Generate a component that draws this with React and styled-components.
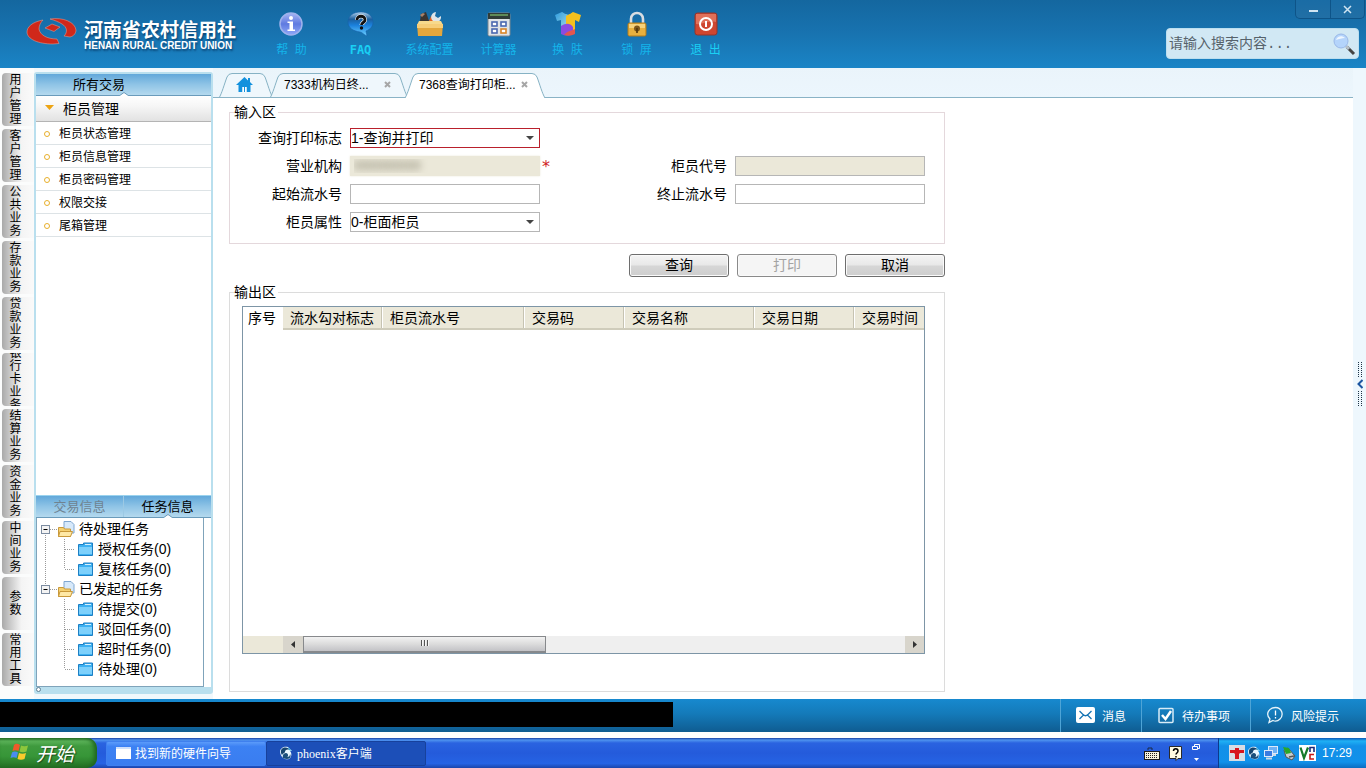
import { useState } from "react";
import styled, { createGlobalStyle } from "styled-components";

const GlobalStyle = createGlobalStyle`
  * {
    box-sizing: border-box;
  }
  body {
    margin: 0;
    font-family: "Liberation Sans", "Noto Sans CJK SC", sans-serif;
    font-size: 14px;
    line-height: 20px;
    color: #000;
    background: #fff;
  }
  button, input, select {
    font-family: inherit;
    font-size: inherit;
    color: inherit;
    margin: 0;
    padding: 0;
    border-radius: 0;
  }
  button {
    border: none;
    background: none;
    cursor: pointer;
  }
  svg {
    display: block;
    flex: none;
  }
  a {
    color: inherit;
    text-decoration: none;
  }
  ul {
    list-style: none;
    margin: 0;
    padding: 0;
  }
`;

const Page = styled.div`
  min-height: 100vh;
  display: flex;
  flex-direction: column;
`;

/* ---------- header ---------- */

const Header = styled.header`
  height: 68px;
  display: flex;
  background: linear-gradient(#14679f, #1873b0 50%, #1a84c6);
`;

const Brand = styled.div`
  width: 257px;
  padding: 17px 0 0 25px;
  display: flex;
  gap: 7px;
`;

const BrandText = styled.div`
  padding-top: 3px;
  color: #fff;
  font-weight: bold;
  white-space: nowrap;
  text-shadow: 1px 2px 2px rgba(0, 40, 80, 0.6);
`;

const BrandName = styled.div`
  font-size: 19px;
  line-height: 21px;
`;

const BrandSub = styled.div`
  font-size: 10px;
  line-height: 10px;
`;

const ToolBar = styled.nav`
  display: flex;
`;

const ToolButton = styled.button`
  width: 69px;
  padding-top: 10px;
  display: flex;
  flex-direction: column;
  align-items: center;
  gap: 2px;
  color: ${(props) => (props.$bright ? "#1ad0f4" : "#14b4ea")};
  font-size: 12px;
  font-weight: ${(props) => (props.$latin ? "bold" : "normal")};
  font-family: ${(props) =>
    props.$latin
      ? '"DejaVu Sans Mono", monospace'
      : '"Liberation Sans", "Noto Sans CJK SC", sans-serif'};
  line-height: 22px;
  white-space: pre;
`;

const HeaderRight = styled.div`
  margin-left: auto;
  display: flex;
  flex-direction: column;
  align-items: flex-end;
  gap: 9px;
`;

const WindowButtons = styled.div`
  display: flex;
  height: 19px;
  margin-right: 1px;
  border: 1px solid #0e5488;
  border-top: none;
  border-radius: 0 0 5px 5px;
  background: linear-gradient(#1a6ca5, #216fa5);
  button {
    width: 34px;
    display: flex;
    align-items: center;
    justify-content: center;
  }
  button + button {
    border-left: 1px solid #0e5488;
  }
`;

const SearchBox = styled.label`
  width: 193px;
  height: 31px;
  margin-right: 7px;
  padding: 0 2px;
  display: flex;
  align-items: center;
  border: 1px solid #bcdff0;
  border-radius: 4px;
  background: #d1e8f4;
  input {
    flex: 1;
    min-width: 0;
    border: none;
    background: transparent;
    font-family: "Liberation Mono", "Noto Sans CJK SC", monospace;
    outline: none;
  }
  input::placeholder {
    color: #56626b;
  }
`;

/* ---------- left side ---------- */

const Body = styled.div`
  flex: 1;
  display: grid;
  grid-template-columns: 34px 179px 1fr;
  background: #f1f8fc;
`;

const ModuleTabs = styled.nav`
  padding: 5px 0 0 2px;
  display: flex;
  flex-direction: column;
  gap: 3px;
  background: #fbfcfc;
`;

const ModuleTab = styled.button`
  width: 32px;
  height: 53px;
  padding: 0 12px 0 7px;
  display: flex;
  align-items: center;
  justify-content: center;
  overflow: hidden;
  border-radius: 4px 0 0 4px;
  background: linear-gradient(90deg, #a9a9a9, #c9c9c9 25%, #f4f4f4 60%, #fafafa);
  font-size: 12px;
  line-height: 13px;
  span {
    width: 12px;
    word-break: break-all;
  }
`;

const Sidebar = styled.aside`
  margin: 4px 0 5px;
  display: flex;
  flex-direction: column;
  border: 2px solid #b9dfee;
  border-radius: 3px;
  background: #fff;
`;

const BlueBar = styled.div`
  height: 22px;
  display: flex;
  background: linear-gradient(#62a8da, #8fc4e6 50%, #b4d9ee);
  border-bottom: 1px solid #6a9bbb;
`;

const BarTab = styled.button`
  position: relative;
  flex: 1;
  padding-left: ${(props) => (props.$wide ? 37 : 0)}px;
  text-align: ${(props) => (props.$wide ? "left" : "center")};
  font-size: 13px;
  line-height: 22px;
  color: ${(props) => (props.$muted ? "#6f8391" : "#000")};
  border-right: ${(props) => (props.$muted ? "1px solid #9cc9e4" : "none")};
`;

// little notch under the selected tab
const Notch = styled.svg`
  position: absolute;
  left: calc(50% - 5px);
  bottom: -1px;
`;

const Category = styled.button`
  height: 26px;
  padding: 0 0 2px 9px;
  display: flex;
  align-items: center;
  gap: 9px;
  border-bottom: 1px solid #b4b4b4;
  background: linear-gradient(#ffffff, #f6f6f6 40%, #e2e2e2);
`;

const MenuItem = styled.li`
  height: 23px;
  border-bottom: 1px solid #dde3e6;
  a {
    height: 23px;
    padding-left: 8px;
    display: flex;
    align-items: center;
    gap: 9px;
    font-size: 12px;
  }
  a::before {
    content: "";
    width: 4px;
    height: 4px;
    border: 1px solid #e8b02c;
    border-radius: 50%;
  }
`;

const TaskPane = styled.section`
  margin-top: auto;
  border-top: 1px solid #9bd3ee;
  background: #b9dfee;
`;

const TaskInner = styled.div`
  padding-right: 7px;
  background: #fff;
`;

const Tree = styled.ul`
  height: 169px;
  padding: 1px 0 0 4px;
  border: 1px solid #7fa3ba;
  border-top: none;
`;

const TreeRow = styled.li`
  height: 20px;
  display: flex;
  align-items: center;
  white-space: nowrap;
  svg + svg {
    margin-right: ${(props) => (props.$root ? 4 : 5)}px;
  }
`;

// small round handle in the strip below the tree
const Handle = styled.button`
  display: block;
  width: 5px;
  height: 5px;
  border: 1px solid #5d7f94;
  border-radius: 50%;
  background: #fff;
`;

/* ---------- work area ---------- */

const Main = styled.main`
  min-width: 0;
  display: grid;
  grid-template-columns: 1fr 13px;
  background: #eef7fd;
`;

const Work = styled.div`
  min-width: 0;
  display: flex;
  flex-direction: column;
`;

const PageTabs = styled.div`
  height: 30px;
  padding: 5px 0 0 6px;
  display: flex;
  border-bottom: 1px solid #8ab3c6;
  background: linear-gradient(#eaf4fa, #ecf6fd);
`;

// the active tab is one pixel taller, so it covers the strip's bottom line
const PageTab = styled.div`
  height: ${(props) => (props.$active ? 25 : 24)}px;
  display: flex;
  overflow: hidden;
  position: relative;
  margin-right: -3px;
  z-index: ${(props) => (props.$active ? 2 : 1)};
  button {
    font-size: 12px;
    line-height: 20px;
    white-space: nowrap;
  }
`;

const TabFace = styled.div`
  height: 25px;
  width: ${(props) => props.$width}px;
  padding: 0 3px 3px 0;
  display: flex;
  align-items: center;
  justify-content: ${(props) => (props.$center ? "center" : "space-between")};
  border-top: 1px solid #86b2c4;
  background: ${(props) => (props.$active ? "#fff" : "#eff7fc")};
`;

const Panel = styled.div`
  flex: 1;
  padding: 5px 0 7px 16px;
  display: flex;
  flex-direction: column;
  background: #fff;
`;

const Group = styled.fieldset`
  width: 100%;
  max-width: 716px;
  min-width: 0;
  margin: 0;
  padding: ${(props) => (props.$output ? "5px 19px 37px 12px" : "7px 19px 11px 0")};
  border: 1px solid ${(props) => (props.$output ? "#dcdcdc" : "#e4d8dc")};
  display: flex;
  flex-direction: column;
  gap: 8px;
  flex: ${(props) => (props.$output ? 1 : "none")};
  legend {
    margin-left: ${(props) => (props.$output ? -8 : 4)}px;
    padding: 0 2px 0 0;
    line-height: 18px;
  }
`;

const FormRow = styled.div`
  display: flex;
  justify-content: space-between;
`;

const Field = styled.div`
  display: flex;
  align-items: center;
  gap: 8px;
  label {
    width: 112px;
    text-align: right;
    line-height: 20px;
  }
`;

const Control = styled.div`
  position: relative;
  width: 190px;
  height: 20px;
  svg {
    position: absolute;
    right: 6px;
    top: 8px;
    pointer-events: none;
  }
`;

const TextInput = styled.input`
  display: block;
  width: 100%;
  height: 20px;
  padding: 0 2px;
  border: 1px solid #b6b6b6;
  background: ${(props) => (props.disabled ? "#ebe8d9" : "#fff")};
`;

const MaskedInput = styled(TextInput)`
  border: none;
  padding-left: 4px;
  color: transparent;
  font-size: 12px;
  text-shadow: 0 0 7px #77735f;
  box-shadow: 0 0 2px #ebe8d9;
`;

const Select = styled.select`
  appearance: none;
  display: block;
  width: 100%;
  height: 20px;
  line-height: 18px;
  border: 1px solid ${(props) => (props.$invalid ? "#b9202c" : "#b6b6b6")};
  background: #fff;
`;

const Required = styled.span`
  margin-left: -6px;
  color: #d01c24;
  font-family: "DejaVu Sans", sans-serif;
  font-size: 16px;
  height: 18px;
`;

const Actions = styled.div`
  width: 100%;
  max-width: 716px;
  margin: 10px 0 6px;
  display: flex;
  justify-content: flex-end;
  gap: 8px;
`;

const ActionButton = styled.button`
  width: 100px;
  height: 23px;
  border: 1px solid #6e6e6e;
  border-radius: 3px;
  background: linear-gradient(#f4f4f4, #e8e8e8 48%, #d6d6d6 52%, #cecece);
  box-shadow: inset 0 0 0 1px #fafafa;
  line-height: 19px;
  &:disabled {
    color: #a3a3a3;
    background: #f5f5f5;
    border-color: #8a8a8a;
  }
`;

const Grid = styled.div`
  flex: 1;
  min-width: 0;
  display: flex;
  flex-direction: column;
  justify-content: space-between;
  overflow: hidden;
  border: 1px solid #7d95a6;
`;

const Table = styled.table`
  width: 712px;
  table-layout: fixed;
  border-collapse: collapse;
  th {
    height: 22px;
    padding: 0 0 0 7px;
    text-align: left;
    font-weight: normal;
    line-height: 20px;
    white-space: nowrap;
    background: #ebe8d9;
    border-bottom: 2px solid #cfccbb;
    box-shadow: inset -1px 0 0 #fff, inset -2px 0 0 #c6c3b2;
  }
  th:first-child {
    padding-left: 5px;
    background: #fff;
    border-color: #fff;
    box-shadow: none;
  }
`;

const ScrollRow = styled.div`
  height: 17px;
  display: grid;
  grid-template-columns: 40px 20px 1fr 19px;
  background: #efefef;
  > :first-child {
    background: #ebe8d9;
  }
  > button {
    display: flex;
    align-items: center;
    justify-content: center;
    background: #d8d5cc;
  }
`;

const Thumb = styled.div`
  width: 243px;
  height: 17px;
  border: 1px solid #87898c;
  border-bottom-width: 2px;
  background: linear-gradient(#f2f2f2, #dcdcdc 50%, #c2c2c6);
  display: flex;
  justify-content: center;
  gap: 1px;
  padding-top: 3px;
  i {
    width: 2px;
    height: 6px;
    background: linear-gradient(90deg, #555 50%, #f6f6f6 50%);
  }
`;

const Rail = styled.button`
  width: 13px;
  display: flex;
  flex-direction: column;
  align-items: center;
  justify-content: center;
`;

/* ---------- bottom bars ---------- */

const StatusBar = styled.footer`
  height: 33px;
  margin-bottom: 6px;
  display: flex;
  justify-content: space-between;
  align-items: stretch;
  background: linear-gradient(#1789cf, #147ab9 45%, #0f5c91);
`;

const BlackStrip = styled.div`
  width: 673px;
  margin: 3px 0 5px;
  background: #000;
`;

const StatusLinks = styled.div`
  display: flex;
`;

const StatusButton = styled.button`
  padding: 0 ${(props) => props.$end}px 1px 15px;
  display: flex;
  align-items: center;
  gap: 7px;
  color: #fff;
  font-size: 12px;
  border-left: 1px solid #4ea4d6;
`;

const TaskBar = styled.footer`
  height: 30px;
  display: flex;
  align-items: stretch;
  background: linear-gradient(#1941a5 0, #4f94ef 2px, #2a63e0 5px, #245bdb 50%, #2663e4 85%, #1b45ac);
`;

const StartButton = styled.button`
  width: 97px;
  margin-right: 9px;
  padding: 0 0 2px 10px;
  display: flex;
  align-items: center;
  gap: 6px;
  border-radius: 0 10px 10px 0;
  background: linear-gradient(#2b752c, #5cb45a 3px, #3f9a3e 8px, #379638 60%, #246f24);
  box-shadow: inset -3px 0 4px #1f661f;
  color: #fff;
  font-size: 19px;
  font-style: italic;
  text-shadow: 1px 1px 1px #1b4a1b;
  white-space: nowrap;
`;

const TaskButton = styled.button`
  width: 160px;
  height: 25px;
  margin: 3px 0 0 0;
  padding: 0 0 1px ${(props) => (props.$active ? 12 : 9)}px;
  display: flex;
  align-items: center;
  gap: 4px;
  border-radius: 2px;
  border: 1px solid ${(props) => (props.$active ? "#17419c" : "#3f80ee")};
  background: ${(props) =>
    props.$active ? "#1c4fb8" : "linear-gradient(#5b9bfa, #3c81f3 20%, #3a7df0)"};
  color: #fff;
  font-family: "Liberation Serif", "Noto Sans CJK SC", serif;
  font-size: 12px;
`;

const QuickTools = styled.div`
  margin-left: auto;
  padding-right: 17px;
  display: flex;
  align-items: center;
  gap: 9px;
`;

const Tray = styled.div`
  width: 148px;
  padding-left: 10px;
  display: flex;
  align-items: center;
  gap: 2px;
  border-left: 1px solid #0b3a8c;
  background: linear-gradient(#0c59b9, #1fb0f4 3px, #1290e8 8px, #1191ea 80%, #0c6cc0);
  color: #fff;
  font-size: 12px;
  time {
    margin-left: 4px;
  }
`;

/* ---------- drawings ---------- */

const Logo = () => (
  <svg width="52" height="30" viewBox="0 0 52 30" stroke="#e9a596" strokeWidth="0.5">
    <path d="M18 3C7 5 2 10 2 15C2 22 13 27 28 27L34 26.500L32 22C22 22 15 18 14 12C14 8 16 5 18 3Z" fill="#d0281a" />
    <path d="M25 2C38 0 50 5 51 13C51 16 49 19 45 20L39 19C43 15 42 10 37 7C34 5 29 3 25 2Z" fill="#d0281a" />
    <path d="M20 11L27 7L35 10L29 14.500Z" fill="#d0281a" />
  </svg>
);

const HelpIcon = () => (
  <svg width="26" height="27" viewBox="0 0 26 27">
    <defs>
      <linearGradient id="info" x1="0" y1="0" x2="0" y2="1">
        <stop offset="0" stopColor="#a5b4f4" />
        <stop offset="0.5" stopColor="#5f7ae0" />
        <stop offset="1" stopColor="#8fa8f8" />
      </linearGradient>
    </defs>
    <circle cx="12" cy="14" r="11" fill="url(#info)" stroke="#9fb2ec" strokeWidth="1.5" />
    <circle cx="12" cy="8" r="2" fill="#fff" />
    <path d="M8.500 11.500H14v8h2V21H8.500v-1.500h2V13h-2z" fill="#fff" />
  </svg>
);

const FaqIcon = () => (
  <svg width="28" height="27" viewBox="0 0 28 27">
    <defs>
      <linearGradient id="faq" x1="0" y1="0" x2="0" y2="1">
        <stop offset="0" stopColor="#b4d4ee" />
        <stop offset="0.3" stopColor="#1c5f9e" />
        <stop offset="0.55" stopColor="#1a80dc" />
        <stop offset="1" stopColor="#6cd0ff" />
      </linearGradient>
    </defs>
    <path d="M14 2C6 2 1 6 1 12s5 9 12 10c2 0 4 3 7 4l-1-5c5-2 7-5 7-9C26 6 21 2 14 2Z" fill="url(#faq)" stroke="#1660a8" strokeWidth="0.6" />
    <path d="M10 10c0-5 8-5 8 0 0 2.500-3.500 2.500-3.500 5" fill="none" stroke="#fff" strokeWidth="4" />
    <path d="M10 10c0-5 8-5 8 0 0 2.500-3.500 2.500-3.500 5" fill="none" stroke="#111" strokeWidth="2.8" />
    <circle cx="14.500" cy="18" r="1.700" fill="#111" />
  </svg>
);

const BoxIcon = () => (
  <svg width="28" height="27" viewBox="0 0 28 27">
    <path d="M4 11 5 4l5-2 3 9z" fill="#3a3430" />
    <path d="M4 5l3-2 2 1-3 3z" fill="#a8826a" />
    <path d="M13 11l2-5 4 1-1 5z" fill="#e2621e" />
    <path d="M20 2a5 5 0 1 0 5 4l-3 2-3-2z" fill="#dfe5e8" />
    <path d="M3 11h22l2 4H1z" fill="#f7d98c" />
    <path d="M1 14h26l-1 12H2z" fill="#e3a63c" />
    <path d="M1 14h26v4H1z" fill="#f6cd78" />
  </svg>
);

const CalcIcon = () => (
  <svg width="24" height="27" viewBox="0 0 24 27">
    <rect x="1" y="3" width="22" height="23" rx="1.500" fill="#dfe3e6" stroke="#7b8790" />
    <rect x="1" y="3" width="22" height="6" fill="#303c37" />
    <rect x="3" y="4" width="18" height="2" fill="#5f8b58" />
    <g fill="#fff" stroke="#4a68b0" strokeWidth="1.600">
      <rect x="5" y="12" width="5" height="4" />
      <rect x="14" y="12" width="5" height="4" />
      <rect x="5" y="19" width="5" height="4" />
      <rect x="14" y="19" width="5" height="4" stroke="#d98528" />
    </g>
  </svg>
);

const ShirtIcon = () => (
  <svg width="28" height="27" viewBox="0 0 28 27">
    <defs>
      <linearGradient id="sleeve" x1="0" y1="0" x2="1" y2="1">
        <stop offset="0" stopColor="#2d9be0" />
        <stop offset="1" stopColor="#a6dce0" />
      </linearGradient>
    </defs>
    <path d="M8 2 1 5l2 6 4-1v9h8V5z" fill="url(#sleeve)" />
    <path d="M19 2l8 3-2 7-4-2v12l-9-4V6z" fill="#f4c01e" />
    <path d="M7 16c5-3 9-3 12 1v7c-4 2-8 2-12 0z" fill="#8b4be0" />
    <path d="M10 25c3-4 7-4 11-6v5c-4 2-7 2-11 1z" fill="#e3564e" />
    <path d="M9 2h9c-2 3-7 3-9 0z" fill="#1a6fa8" />
  </svg>
);

const LockIcon = () => (
  <svg width="22" height="27" viewBox="0 0 22 27">
    <path d="M5 14V9c0-8 12-8 12 0v5" fill="none" stroke="#d8dde2" strokeWidth="2.600" />
    <rect x="2" y="13" width="18" height="13" rx="1.500" fill="#e8b03e" stroke="#b27a18" />
    <rect x="3" y="14" width="16" height="4" fill="#f6d27a" />
    <circle cx="11" cy="18.500" r="3" fill="#7d571b" />
    <path d="M11 18v5" stroke="#513508" strokeWidth="1.600" />
  </svg>
);

const ExitIcon = () => (
  <svg width="24" height="27" viewBox="0 0 24 27">
    <rect x="1" y="3" width="22" height="22" rx="2.500" fill="#cf4630" stroke="#94342b" />
    <path d="M2 4h20v8C14 10 8 15 2 14z" fill="#e0705a" />
    <circle cx="12" cy="14" r="6" fill="none" stroke="#fff" strokeWidth="2" />
    <path d="M12 11v6" stroke="#fff" strokeWidth="2" />
  </svg>
);

const SearchIcon = () => (
  <svg width="24" height="24" viewBox="0 0 24 24">
    <path d="M15 15l7 7" stroke="#444" strokeWidth="3" />
    <path d="M14 14l3 3" stroke="#b5bfc8" strokeWidth="3" />
    <circle cx="9" cy="9" r="7" fill="#b4d4fb" stroke="#9ab8e8" />
    <path d="M4 8c1-4 6-5 9-2-3 0-6 1-9 2z" fill="#eef6ff" />
  </svg>
);

const HomeIcon = () => (
  <svg width="17" height="15" viewBox="0 0 17 15">
    <path d="M8.500 0 0 8h2.500v7h4v-5h4v5h4V8H17l-3-3V1h-2v2.500z" fill="#1491dd" />
    <path d="M6.500 10h4v5h-4z" fill="#fff" />
    <path d="M8 10h1v5H8z" fill="#1491dd" />
  </svg>
);

const TabEdge = ({ right, active }) => (
  <svg width="14" height="25" viewBox="0 0 14 25">
    <g transform={right ? "translate(14 0) scale(-1 1)" : undefined}>
      <path
        d="M0 25C3 20 5 12 8 4Q9.500 .5 13 .5H14V25Z"
        fill={active ? "#fff" : "#eff7fc"}
      />
      <path d="M0 25C3 20 5 12 8 4Q9.500 .5 13 .5H14" fill="none" stroke="#86b2c4" />
    </g>
  </svg>
);

const CloseMark = () => (
  <svg width="7" height="7" viewBox="0 0 7 7">
    <path d="M1 1l5 5M6 1L1 6" stroke="#a6a6a6" strokeWidth="2" />
  </svg>
);

const BarNotch = () => (
  <Notch width="10" height="4" viewBox="0 0 10 4">
    <path d="M0 4 5 .5 10 4" fill="#fff" stroke="#6a9bbb" />
  </Notch>
);

const SelectArrow = () => (
  <svg width="8" height="4" viewBox="0 0 8 4">
    <path d="M0 0h8L4 4z" fill="#444" />
  </svg>
);

// branch lines in front of a tree row
const RootLines = ({ last }) => (
  <svg width="17" height="20" viewBox="0 0 17 20">
    <path d={last ? "M4.500 0V10" : "M4.500 10V20"} stroke="#9a9a9a" strokeDasharray="1 1" />
    <path d="M9 10.500h8" stroke="#9a9a9a" strokeDasharray="1 1" />
    <rect x="0.500" y="6.500" width="8" height="8" fill="#f4f4f4" stroke="#7b8ba0" />
    <path d="M2.500 10.500h4" stroke="#000" />
  </svg>
);

const ChildLines = ({ last, trunk }) => (
  <svg width="37" height="20" viewBox="0 0 37 20">
    {trunk && <path d="M4.500 0V20" stroke="#9a9a9a" strokeDasharray="1 1" />}
    <path d={`M23.500 0V${last ? 10 : 20}`} stroke="#9a9a9a" strokeDasharray="1 1" />
    <path d="M24 10.500h10" stroke="#9a9a9a" strokeDasharray="1 1" />
  </svg>
);

const RootFolder = () => (
  <svg width="17" height="18" viewBox="0 0 17 18">
    <path d="M6 1.500h7l3 3V13H6z" fill="#d7e9fa" stroke="#7ea6d0" />
    <path d="M.5 7.500h5l1 1.500h6v7.500H.5z" fill="#f5d171" stroke="#c9993a" />
    <path d="M2 11.500h12.500l-2 5H.5z" fill="#ffe9a6" stroke="#c9993a" />
  </svg>
);

const ChildFolder = () => (
  <svg width="15" height="14" viewBox="0 0 15 14">
    <path d="M.5 2.500h5V1h9v12.500H.5z" fill="#3eb1f1" stroke="#1c7fc4" />
    <path d="M1 5h13v7H1z" fill="#7dd0fb" />
    <path d="M7 2.500h6" stroke="#d4f0ff" />
  </svg>
);

const ScrollArrow = ({ right }) => (
  <svg width="4" height="7" viewBox="0 0 4 7">
    <path d={right ? "M0 0v7l4-3.500z" : "M4 0v7L0 3.500z"} fill="#333" />
  </svg>
);

const RailDots = () => (
  <svg width="4" height="15" viewBox="0 0 4 15">
    <path d="M.5 0V15M3.500 0V15" stroke="#1d3346" strokeDasharray="1 1" />
  </svg>
);

const MailIcon = () => (
  <svg width="19" height="16" viewBox="0 0 19 16">
    <rect width="19" height="16" rx="2" fill="#fff" />
    <path d="M3.500 4l4 4-4 4M15.500 4l-4 4 4 4M7 7.500c1.500 1.500 3.500 1.500 5 0" fill="none" stroke="#1574b4" strokeWidth="1.300" />
  </svg>
);

const CheckIcon = () => (
  <svg width="18" height="17" viewBox="0 0 18 17">
    <rect x="2" y="1.500" width="14" height="14" rx="1" fill="none" stroke="#d8ecf7" strokeWidth="1.500" />
    <path d="M5 8l3.500 4L14 4" fill="none" stroke="#fff" strokeWidth="2.500" />
  </svg>
);

const RiskIcon = () => (
  <svg width="18" height="18" viewBox="0 0 18 18">
    <path d="M3 16.500l1-3.500C-1 8 3 1.500 9.500 1.500S18 9 14 13c-2 2-5 2.500-7 1.500z" fill="none" stroke="#e6f3fa" strokeWidth="1.300" />
    <path d="M9.500 4.500v5M9.500 11v1.500" stroke="#fff" strokeWidth="1.300" />
  </svg>
);

const WindowsFlag = () => (
  <svg width="20" height="18" viewBox="0 0 20 18">
    <path d="M4 2c2-2 4-1 6 0L8.500 8c-2-1-4-1-6 0z" fill="#ee5a2a" />
    <path d="M11 2.500c2 1 5 1 7 0l-1.500 6c-2 1-5 1-7 0z" fill="#8cc63c" />
    <path d="M2 9.500c2-1.500 4-1 6 0L6.500 15c-2-1-4-1-6 0z" fill="#4a8cf0" />
    <path d="M9 10c2 1 5 1 7 0l-1.500 6c-2 1-5 1-7 0z" fill="#fbcb2c" />
  </svg>
);

const Phoenix = () => (
  <svg width="14" height="14" viewBox="0 0 14 14">
    <path d="M1 6C1 2 5 0 9 1l4 4-2 0c2 2 2 6-1 8-4 1-8-1-9-7z" fill="#e9f7ff" />
    <path d="M4 2c3-1 6 0 7 2-3-1-5 0-5 2 0 1-2 1-3 3C1 6 2 3 4 2z" fill="#16456f" />
    <path d="M4 12c-1-3 1-5 3-5s3 3 1 4c2 0 3-1 3-3 2 3-1 7-7 4z" fill="#1b4f7c" />
    <path d="M9 1l4 4-3-1z" fill="#2ea7d8" />
  </svg>
);

const KeyboardIcon = () => (
  <svg width="16" height="13" viewBox="0 0 16 13">
    <path d="M4 3V1h4v2" fill="none" stroke="#1a2a44" />
    <rect x="0.500" y="4.500" width="15" height="8" fill="#f6f2dc" stroke="#1b1b1b" />
    <path d="M2 6.500h12M2 8.500h12M2 10.500h12" stroke="#222" strokeDasharray="1 1" />
  </svg>
);

const QuestionIcon = () => (
  <svg width="14" height="15" viewBox="0 0 14 15">
    <path d="M.5.500h12v12H9l-2 2v-2H.5z" fill="#fffbe2" stroke="#2a2a2a" />
    <path d="M4.500 5c0-3 4.500-3 4.500 0 0 2-2 2-2 3.500M7 10v1.500" fill="none" stroke="#000" strokeWidth="1.500" />
  </svg>
);

const RestoreIcon = () => (
  <svg width="9" height="20" viewBox="0 0 9 20">
    <path d="M2.500 3V1.500h5v4H6M.5 3.500h5v3h-5z" fill="none" stroke="#fff" />
    <path d="M2 15h5l-2.500 3z" fill="#fff" />
  </svg>
);

const ShieldIcon = () => (
  <svg width="16" height="16" viewBox="0 0 16 16">
    <rect width="16" height="16" fill="#d7dde4" />
    <path d="M1 5h5V3h4v2h5v3h-4l-1 1v5H6V9L5 8H1z" fill="#d8151c" />
  </svg>
);

const NetworkIcon = () => (
  <svg width="16" height="16" viewBox="0 0 16 16">
    <rect x="5.500" y="1.500" width="9" height="7" fill="#6fb2f5" stroke="#dceafa" />
    <path d="M8 10h5" stroke="#cdd9e8" strokeWidth="2" />
    <rect x="1.500" y="5.500" width="8" height="6" fill="#3a7be0" stroke="#dceafa" />
    <path d="M3 13.500h6" stroke="#cdd9e8" strokeWidth="2" />
  </svg>
);

const UsbIcon = () => (
  <svg width="16" height="16" viewBox="0 0 16 16">
    <path d="M3 5l4-2 7 8-3 4-6-3z" fill="#c9ced2" stroke="#555" />
    <path d="M2 2l6 1 2 5-5 1z" fill="#28a828" />
    <path d="M8 12l5-1" stroke="#555" strokeWidth="1.500" />
  </svg>
);

const VncIcon = () => (
  <svg width="17" height="16" viewBox="0 0 17 16">
    <rect width="17" height="16" fill="#fff" />
    <path d="M1.500 2.500L5 13l4-10.500" fill="none" stroke="#157a2a" strokeWidth="2.200" />
    <path d="M11 7V2.500h4V7" fill="none" stroke="#1b2a7a" strokeWidth="1.600" />
    <path d="M15 9.500h-4V14h4" fill="none" stroke="#c91a1a" strokeWidth="1.600" />
  </svg>
);

/* ---------- data ---------- */

const tools = [
  { name: "帮  助", icon: <HelpIcon /> },
  { name: "FAQ", icon: <FaqIcon />, latin: true },
  { name: "系统配置", icon: <BoxIcon /> },
  { name: "计算器", icon: <CalcIcon /> },
  { name: "换  肤", icon: <ShirtIcon /> },
  { name: "锁  屏", icon: <LockIcon /> },
  { name: "退  出", icon: <ExitIcon />, bright: true },
];

const modules = [
  "用户管理",
  "客户管理",
  "公共业务",
  "存款业务",
  "贷款业务",
  "银行卡业务",
  "结算业务",
  "资金业务",
  "中间业务",
  "参数",
  "常用工具",
];

const menu = ["柜员状态管理", "柜员信息管理", "柜员密码管理", "权限交接", "尾箱管理"];

const tree = [
  { name: "待处理任务", root: true },
  { name: "授权任务(0)", trunk: true },
  { name: "复核任务(0)", trunk: true, last: true },
  { name: "已发起的任务", root: true, last: true },
  { name: "待提交(0)" },
  { name: "驳回任务(0)" },
  { name: "超时任务(0)" },
  { name: "待处理(0)", last: true },
];

const columns = [
  { name: "序号", width: 40 },
  { name: "流水勾对标志", width: 100 },
  { name: "柜员流水号", width: 142 },
  { name: "交易码", width: 100 },
  { name: "交易名称", width: 130 },
  { name: "交易日期", width: 100 },
  { name: "交易时间", width: 100 },
];

export default function App() {
  const [printFlag, setPrintFlag] = useState("1");
  const [tellerType, setTellerType] = useState("0");
  const [startNo, setStartNo] = useState("");
  const [endNo, setEndNo] = useState("");

  return (
    <Page>
      <GlobalStyle />
      <Header>
        <Brand>
          <Logo />
          <BrandText>
            <BrandName>河南省农村信用社</BrandName>
            <BrandSub>HENAN RURAL CREDIT UNION</BrandSub>
          </BrandText>
        </Brand>
        <ToolBar>
          {tools.map((t) => (
            <ToolButton key={t.name} $latin={t.latin} $bright={t.bright || t.latin}>
              {t.icon}
              {t.name}
            </ToolButton>
          ))}
        </ToolBar>
        <HeaderRight>
          <WindowButtons>
            <button aria-label="最小化">
              <svg width="9" height="9" viewBox="0 0 9 9">
                <path d="M0 6h9" stroke="#cfe4f2" strokeWidth="2" />
              </svg>
            </button>
            <button aria-label="关闭">
              <svg width="9" height="9" viewBox="0 0 9 9">
                <path d="M1 1l7 7M8 1L1 8" stroke="#cfe4f2" strokeWidth="1.500" />
              </svg>
            </button>
          </WindowButtons>
          <SearchBox>
            <input type="text" aria-label="搜索" placeholder="请输入搜索内容..." />
            <SearchIcon />
          </SearchBox>
        </HeaderRight>
      </Header>

      <Body>
        <ModuleTabs>
          {modules.map((m) => (
            <ModuleTab key={m}>
              <span>{m}</span>
            </ModuleTab>
          ))}
        </ModuleTabs>

        <Sidebar>
          <BlueBar>
            <BarTab $wide>
              所有交易
              <BarNotch />
            </BarTab>
          </BlueBar>
          <Category>
            <svg width="9" height="5" viewBox="0 0 9 5">
              <path d="M0 0h9L4.500 5z" fill="#eda413" />
            </svg>
            柜员管理
          </Category>
          <ul>
            {menu.map((m) => (
              <MenuItem key={m}>
                <a href="#menu">{m}</a>
              </MenuItem>
            ))}
          </ul>
          <TaskPane>
            <BlueBar>
              <BarTab $muted>交易信息</BarTab>
              <BarTab>
                任务信息
                <BarNotch />
              </BarTab>
            </BlueBar>
            <TaskInner>
              <Tree>
                {tree.map((t) => (
                  <TreeRow key={t.name} $root={t.root}>
                    {t.root ? <RootLines last={t.last} /> : <ChildLines last={t.last} trunk={t.trunk} />}
                    {t.root ? <RootFolder /> : <ChildFolder />}
                    {t.name}
                  </TreeRow>
                ))}
              </Tree>
            </TaskInner>
            <Handle aria-label="调整大小" />
          </TaskPane>
        </Sidebar>

        <Main>
          <Work>
            <PageTabs>
              <PageTab>
                <TabEdge />
                <TabFace $width={26} $center>
                  <button aria-label="首页">
                    <HomeIcon />
                  </button>
                </TabFace>
                <TabEdge right />
              </PageTab>
              <PageTab>
                <TabEdge />
                <TabFace $width={110}>
                  <button>7333机构日终...</button>
                  <button aria-label="关闭标签">
                    <CloseMark />
                  </button>
                </TabFace>
                <TabEdge right />
              </PageTab>
              <PageTab $active>
                <TabEdge active />
                <TabFace $width={112} $active>
                  <button>7368查询打印柜...</button>
                  <button aria-label="关闭标签">
                    <CloseMark />
                  </button>
                </TabFace>
                <TabEdge right active />
              </PageTab>
            </PageTabs>

            <Panel>
              <Group>
                <legend>输入区</legend>
                <FormRow>
                  <Field>
                    <label htmlFor="printFlag">查询打印标志</label>
                    <Control>
                      <Select
                        id="printFlag"
                        $invalid
                        value={printFlag}
                        onChange={(e) => setPrintFlag(e.target.value)}
                      >
                        <option value="1">1-查询并打印</option>
                      </Select>
                      <SelectArrow />
                    </Control>
                  </Field>
                </FormRow>
                <FormRow>
                  <Field>
                    <label htmlFor="branch">营业机构</label>
                    <Control>
                      <MaskedInput id="branch" disabled defaultValue="0000000000" />
                    </Control>
                    <Required>*</Required>
                  </Field>
                  <Field>
                    <label htmlFor="tellerNo">柜员代号</label>
                    <Control>
                      <TextInput id="tellerNo" disabled />
                    </Control>
                  </Field>
                </FormRow>
                <FormRow>
                  <Field>
                    <label htmlFor="startNo">起始流水号</label>
                    <Control>
                      <TextInput
                        id="startNo"
                        value={startNo}
                        onChange={(e) => setStartNo(e.target.value)}
                      />
                    </Control>
                  </Field>
                  <Field>
                    <label htmlFor="endNo">终止流水号</label>
                    <Control>
                      <TextInput
                        id="endNo"
                        value={endNo}
                        onChange={(e) => setEndNo(e.target.value)}
                      />
                    </Control>
                  </Field>
                </FormRow>
                <FormRow>
                  <Field>
                    <label htmlFor="tellerType">柜员属性</label>
                    <Control>
                      <Select
                        id="tellerType"
                        value={tellerType}
                        onChange={(e) => setTellerType(e.target.value)}
                      >
                        <option value="0">0-柜面柜员</option>
                      </Select>
                      <SelectArrow />
                    </Control>
                  </Field>
                </FormRow>
              </Group>

              <Actions>
                <ActionButton>查询</ActionButton>
                <ActionButton disabled>打印</ActionButton>
                <ActionButton>取消</ActionButton>
              </Actions>

              <Group $output>
                <legend>输出区</legend>
                <Grid>
                  <Table>
                    <colgroup>
                      {columns.map((c) => (
                        <col key={c.name} width={c.width} />
                      ))}
                    </colgroup>
                    <thead>
                      <tr>
                        {columns.map((c) => (
                          <th key={c.name}>{c.name}</th>
                        ))}
                      </tr>
                    </thead>
                  </Table>
                  <ScrollRow>
                    <div />
                    <button aria-label="向左">
                      <ScrollArrow />
                    </button>
                    <Thumb>
                      <i />
                      <i />
                      <i />
                    </Thumb>
                    <button aria-label="向右">
                      <ScrollArrow right />
                    </button>
                  </ScrollRow>
                </Grid>
              </Group>
            </Panel>
          </Work>
          <Rail aria-label="展开">
            <RailDots />
            <svg width="6" height="14" viewBox="0 0 6 14">
              <path d="M5.500 3L1.500 7l4 4" fill="none" stroke="#1c55a0" strokeWidth="2" />
            </svg>
            <RailDots />
          </Rail>
        </Main>
      </Body>

      <StatusBar>
        <BlackStrip />
        <StatusLinks>
          <StatusButton $end={15}>
            <MailIcon />
            消息
          </StatusButton>
          <StatusButton $end={20}>
            <CheckIcon />
            待办事项
          </StatusButton>
          <StatusButton $end={27}>
            <RiskIcon />
            风险提示
          </StatusButton>
        </StatusLinks>
      </StatusBar>

      <TaskBar>
        <StartButton>
          <WindowsFlag />
          开始
        </StartButton>
        <TaskButton>
          <svg width="15" height="12" viewBox="0 0 15 12">
            <rect width="15" height="12" fill="#fff" />
            <rect width="15" height="2" fill="#cfe0fb" />
          </svg>
          找到新的硬件向导
        </TaskButton>
        <TaskButton $active>
          <Phoenix />
          phoenix客户端
        </TaskButton>
        <QuickTools>
          <KeyboardIcon />
          <QuestionIcon />
          <RestoreIcon />
        </QuickTools>
        <Tray>
          <ShieldIcon />
          <Phoenix />
          <NetworkIcon />
          <UsbIcon />
          <VncIcon />
          <time>17:29</time>
        </Tray>
      </TaskBar>
    </Page>
  );
}
